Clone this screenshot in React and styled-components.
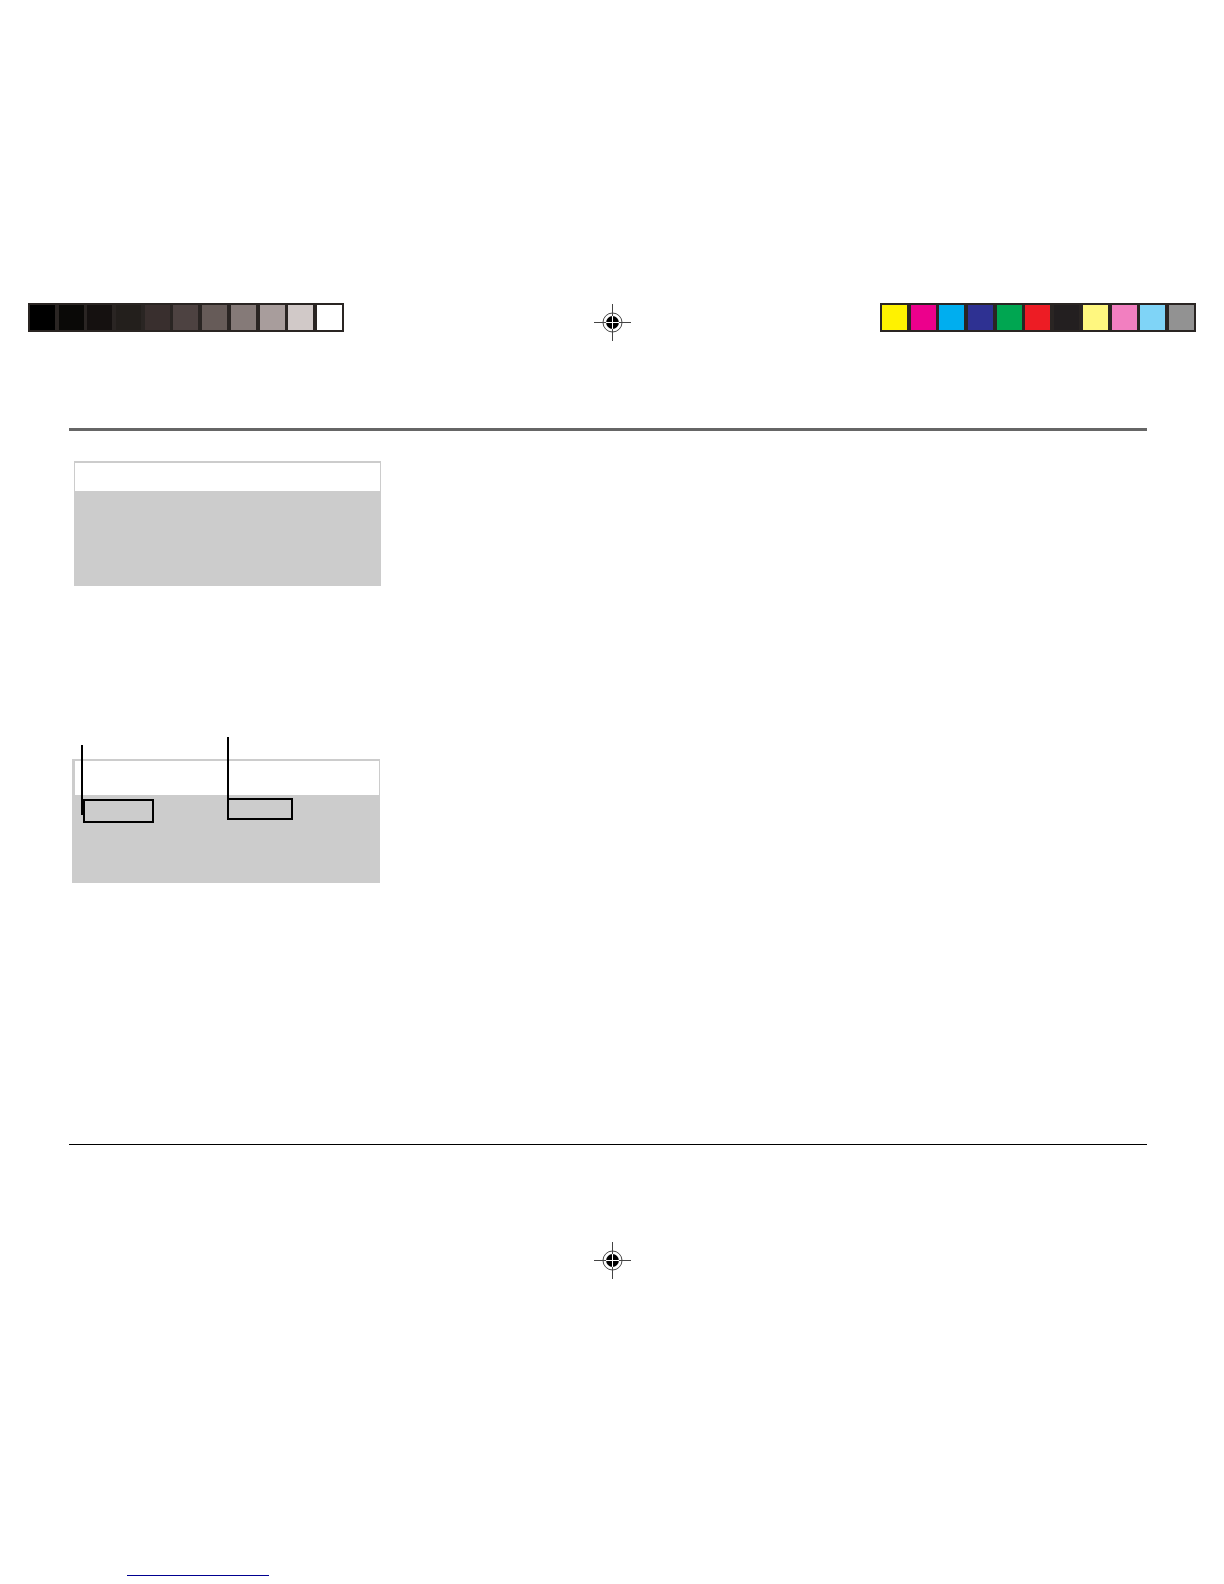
import styled, { createGlobalStyle } from "styled-components";

const GlobalStyle = createGlobalStyle`
  * {
    box-sizing: border-box;
  }

  body {
    margin: 0;
    background: #fff;
    font-family: "Liberation Sans", Arial, sans-serif;
  }
`;

const Page = styled.div`
  display: flex;
  flex-direction: column;
  min-height: 100vh;
  padding: 303px 0 8px;
`;

const PrinterBar = styled.header`
  display: grid;
  grid-template-columns: 1fr auto 1fr;
  align-items: start;
  padding: 0 28px;
`;

const Strip = styled.div`
  display: flex;
  justify-content: space-between;
  justify-self: ${(props) => props.$side};
  width: 316px;
  padding: 2px;
  background: #2a2523;
`;

const Swatch = styled.span`
  width: 25px;
  height: 25px;
  background: ${(props) => props.$color};
`;

const Mark = styled.svg`
  display: block;
  width: 38px;
  height: 37px;
  margin-top: ${(props) => props.$top || 0}px;
`;

const Sheet = styled.main`
  display: flex;
  flex-direction: column;
  margin: 87px 77px 0 69px;
  padding-bottom: 261px;
  border-top: 3px solid #666;
  border-bottom: 1px solid #000;
`;

const Screen = styled.section`
  position: relative;
  width: ${(props) => props.$width}px;
  height: ${(props) => props.$height}px;
  margin: ${(props) => props.$margin};
  padding: ${(props) => props.$frame};
  background: #ccc;
`;

const ScreenTitle = styled.div`
  height: ${(props) => props.$height}px;
  background: #fff;
`;

// callouts lie over the screen and stick out above it
const Leader = styled.span`
  position: absolute;
  left: ${(props) => props.$x}px;
  top: ${(props) => props.$y}px;
  width: 2px;
  height: ${(props) => props.$length}px;
  background: #000;
`;

const Highlight = styled.span`
  position: absolute;
  left: ${(props) => props.$x}px;
  top: ${(props) => props.$y}px;
  width: ${(props) => props.$width}px;
  height: ${(props) => props.$height}px;
  border: 2px solid #000;
`;

const Footer = styled.footer`
  display: flex;
  flex-direction: column;
  align-items: center;
  flex: 1;
`;

const FooterLink = styled.a`
  align-self: flex-start;
  width: 142px;
  height: 16px;
  margin: auto 0 0 127px;
  border-bottom: 1px solid #000090;
`;

const grays = [
  "#000000",
  "#0a0907",
  "#151110",
  "#231f1c",
  "#392f2e",
  "#4d4241",
  "#665b58",
  "#857a78",
  "#a89d9c",
  "#d1c9c8",
  "#ffffff",
];

const inks = [
  "#fff200",
  "#ec008c",
  "#00aeef",
  "#2e3192",
  "#00a651",
  "#ed1c24",
  "#231f20",
  "#fff77f",
  "#f27fc0",
  "#7fd4f7",
  "#929292",
];

function ColorStrip({ colors, side }) {
  return (
    <Strip $side={side}>
      {colors.map((color) => (
        <Swatch key={color} $color={color} />
      ))}
    </Strip>
  );
}

function RegistrationMark({ top }) {
  return (
    <Mark $top={top} viewBox="0 0 38 37" aria-hidden="true">
      <circle cx="19.5" cy="18.5" r="9.5" fill="none" stroke="#333" strokeWidth="0.9" />
      <path d="M1 18.5H38M19.5 0V37" stroke="#444" />
      <circle cx="19.5" cy="18.5" r="6.4" fill="#000" />
      <path d="M13 18.5H26M19.5 12V25" stroke="#fff" />
    </Mark>
  );
}

function App() {
  return (
    <>
      <GlobalStyle />
      <Page>
        <PrinterBar>
          <ColorStrip colors={grays} side="start" />
          <RegistrationMark top={1} />
          <ColorStrip colors={inks} side="end" />
        </PrinterBar>

        <Sheet>
          <Screen $width={307} $height={125} $margin="30px 0 0 5px" $frame="2px 1px 0">
            <ScreenTitle $height={28} />
          </Screen>

          <Screen $width={308} $height={124} $margin="173px 0 0 3px" $frame="2px 1px 0 3px">
            <ScreenTitle $height={34} />
            <Leader $x={9} $y={-14} $length={70} />
            <Highlight $x={11} $y={40} $width={71} $height={24} />
            <Leader $x={155} $y={-22} $length={83} />
            <Highlight $x={155} $y={39} $width={66} $height={22} />
          </Screen>
        </Sheet>

        <Footer>
          <RegistrationMark top={97} />
          <FooterLink href="#" aria-label="Website" />
        </Footer>
      </Page>
    </>
  );
}

export default App;
